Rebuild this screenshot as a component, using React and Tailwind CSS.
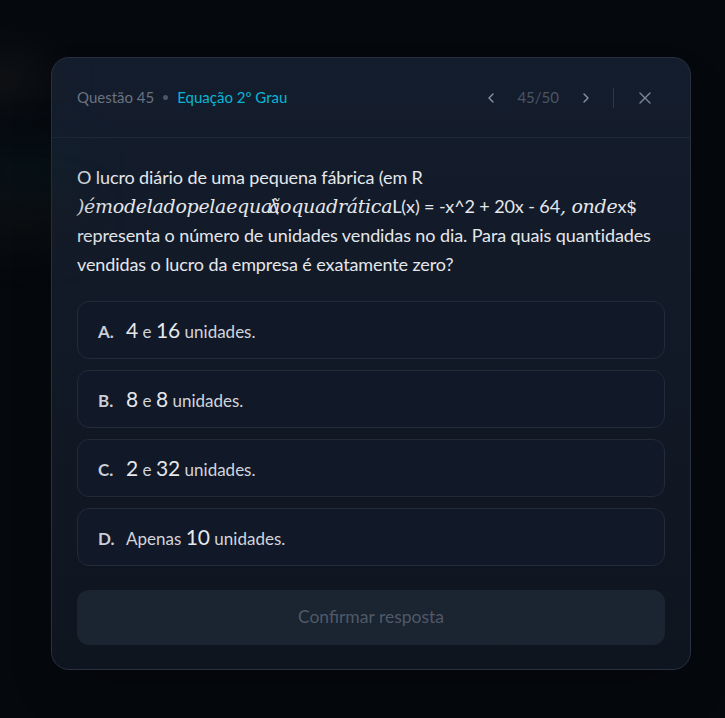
import React from "react";
import { ChevronLeft, ChevronRight, X } from "lucide-react";

const options = [
  { letter: "A.", parts: [["n", "4"], ["t", " e "], ["n", "16"], ["t", " unidades."]] },
  { letter: "B.", parts: [["n", "8"], ["t", " e "], ["n", "8"], ["t", " unidades."]] },
  { letter: "C.", parts: [["n", "2"], ["t", " e "], ["n", "32"], ["t", " unidades."]] },
  { letter: "D.", parts: [["t", "Apenas "], ["n", "10"], ["t", " unidades."]] },
];

const sans = { fontFamily: "Lato, 'Noto Sans', sans-serif" };
const serif = "font-['DejaVu_Serif',serif] italic text-[19px] leading-none tracking-[-0.3px]";

export default function App() {
  return (
    <div className="relative w-[725px] h-[718px] overflow-hidden bg-[#05080d]" style={sans}>
      {/* blurred backdrop */}
      <div className="absolute left-[-40px] top-[60px] w-[90px] h-[40px] rounded-full bg-[#2a2a2a] opacity-40 blur-xl" />
      <div className="absolute left-[-40px] top-[150px] w-[120px] h-[40px] rounded-full bg-[#0d2a2e] opacity-40 blur-xl" />
      <div className="absolute left-[-40px] top-[205px] w-[120px] h-[30px] rounded-full bg-[#1e1e1e] opacity-50 blur-xl" />

      <div className="pt-[57px] pl-[51px]">
        <div className="w-[640px] rounded-[18px] border border-[#273142] bg-gradient-to-b from-[#141d2d] to-[#0f151f] shadow-2xl">
          {/* header */}
          <div className="flex items-center justify-between h-[80px] pl-[25px] pr-[35px] border-b border-[#1e2736]">
            <div className="flex items-center gap-[9px] text-[15px]">
              <span className="text-[#6b7280]">Questão 45</span>
              <span className="w-[5px] h-[5px] rounded-full bg-[#4b5563]" />
              <span className="text-[#06b6d4]">Equação 2º Grau</span>
            </div>
            <div className="flex items-center">
              <ChevronLeft className="w-[16px] h-[16px] text-[#8b95a5]" strokeWidth={2} />
              <span className="ml-[18px] mr-[19px] text-[15px] text-[#4b5563]">45/50</span>
              <ChevronRight className="w-[16px] h-[16px] text-[#8b95a5]" strokeWidth={2} />
              <span className="ml-[19px] mr-[21px] w-px h-[20px] bg-[#2d3748]" />
              <X className="w-[20px] h-[20px] text-[#7a8494]" strokeWidth={1.6} />
            </div>
          </div>

          {/* body */}
          <div className="px-[25px] pt-[25px] pb-[24px]">
            <p className="text-[18px] leading-[29px] text-[#e5e7eb] tracking-[-0.1px]">
              O lucro diário de uma pequena fábrica (em R
              <br />
              <span className={serif}>)émodeladopelaequa</span>
              <span className={serif + " not-italic"}>\</span>
              <span className={serif + " -ml-[9px]"}>ãoquadrática</span>
              L(x) = -x^2 + 20x - 64
              <span className={serif}>, onde</span>
              x
              <span className="font-['DejaVu_Serif',serif] text-[17px] leading-none">$</span>
              <br />
              representa o número de unidades vendidas no dia. Para quais quantidades vendidas o lucro da
              empresa é exatamente zero?
            </p>

            <div className="mt-[22px] flex flex-col gap-[11px]">
              {options.map((o) => (
                <div
                  key={o.letter}
                  className="h-[58px] flex items-center px-[20px] rounded-[12px] border border-[#222b3a] bg-[#111827]"
                >
                  <span className="text-[17px] text-[#d1d5db] whitespace-pre">
                    <span className="inline-block w-[28px] font-bold text-[#c9ced6]">{o.letter}</span>
                    {o.parts.map(([k, v], i) =>
                      k === "n" ? (
                        <span key={i} className="text-[21px] text-[#e5e7eb]">{v}</span>
                      ) : (
                        <span key={i}>{v}</span>
                      )
                    )}
                  </span>
                </div>
              ))}
            </div>

            <button className="mt-[24px] w-full h-[55px] rounded-[12px] bg-[#1b2431] text-[17.5px] text-[#4f5967]">
              Confirmar resposta
            </button>
          </div>
        </div>
      </div>
    </div>
  );
}
